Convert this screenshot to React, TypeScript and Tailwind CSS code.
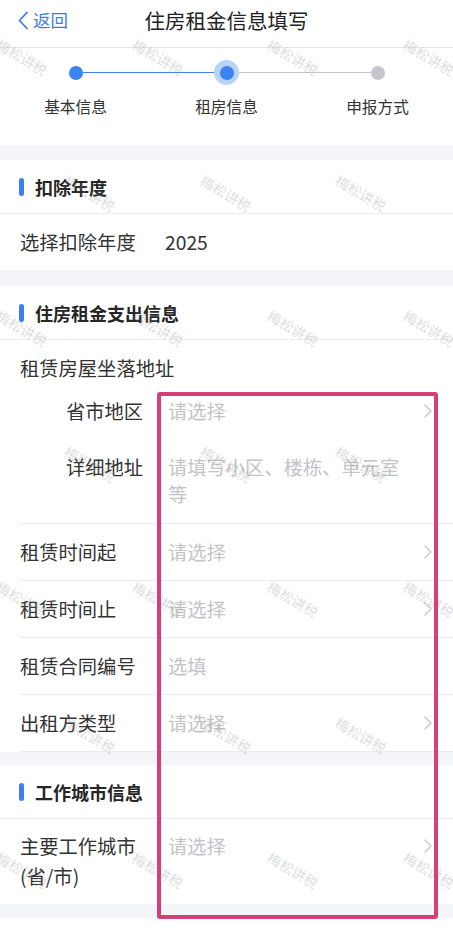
import React from "react";

const Chevron = () => (
  <svg width="8" height="14" viewBox="0 0 8 14" className="shrink-0">
    <polyline points="1,1 7,7 1,13" fill="none" stroke="#c8c8cc" strokeWidth="1.4" strokeLinecap="round" strokeLinejoin="round" />
  </svg>
);

const SectionHeader = ({ title }: { title: string }) => (
  <div className="h-[54px] flex items-center pl-[19px] border-b border-[#ececee] bg-white">
    <div className="w-[5px] h-[18px] rounded-full bg-[#3b7ff0]" />
    <div className="ml-[11px] text-[18px] font-bold text-[#262626] leading-none">{title}</div>
  </div>
);

const Row = ({ label, value, placeholder, chevron }: { label: string; value?: string; placeholder?: string; chevron?: boolean }) => (
  <div className="ml-[20px] h-[57px] flex items-center border-b border-[#ececee] pr-[21px]">
    <div className="w-[148px] shrink-0 text-[19.3px] text-[#333]">{label}</div>
    <div className="flex-1 text-[19.3px] text-[#c3c3c8]">{placeholder}</div>
    {value && <div className="flex-1 text-[19.3px] text-[#333]">{value}</div>}
    {chevron && <Chevron />}
  </div>
);

const Watermarks = () => {
  const rows = [57, 192.5, 328, 463.5, 599, 734.5, 870];
  const items: { x: number; y: number }[] = [];
  rows.forEach((y, i) => {
    const xs = i % 2 === 0 ? [22, 157.5, 293, 428.5] : [-45.5, 90, 225.5, 361, 496.5];
    xs.forEach((x) => items.push({ x, y }));
  });
  return (
    <div className="absolute inset-0 pointer-events-none overflow-hidden">
      {items.map((p, i) => (
        <div
          key={i}
          className="absolute text-[14px] leading-none whitespace-nowrap text-[rgba(140,140,140,0.3)] rotate-[30deg] w-[60px] h-[16px] flex items-center justify-center"
          style={{ left: p.x - 30, top: p.y - 8 }}
        >
          梅松讲税
        </div>
      ))}
    </div>
  );
};

export default function App() {
  return (
    <div className="relative w-[453px] h-[931px] overflow-hidden bg-white font-['Noto_Sans_CJK_SC','Noto_Sans',sans-serif]">
      {/* Header */}
      <div className="h-[48px] border-b border-[#e4e4e6] grid grid-cols-[1fr_auto_1fr] items-start">
        <div className="h-[40px] flex items-center pl-[17px] text-[#3e7fdd]">
          <svg width="12" height="19" viewBox="0 0 12 19">
            <polyline points="10,1.5 2.5,9.5 10,17.5" fill="none" stroke="#3e7fdd" strokeWidth="1.8" strokeLinecap="round" strokeLinejoin="round" />
          </svg>
          <span className="ml-[4px] text-[17.5px] leading-none">返回</span>
        </div>
        <div className="h-[40px] flex items-center text-[20.5px] text-[#222]">住房租金信息填写</div>
        <div />
      </div>

      {/* Stepper */}
      <div className="h-[97px] pt-[12px]">
        <div className="grid grid-cols-3">
          <div className="flex flex-col items-center">
            <div className="w-full h-[25px] flex items-center">
              <div className="flex-1 h-[1.5px] bg-transparent" />
              <div className="w-[14px] h-[14px] rounded-full bg-[#3d83f2]" />
              <div className="flex-1 h-[1.5px] bg-[#3d83f2]" />
            </div>
            <div className="mt-[11px] text-[15.7px] leading-[22px] text-[#333]">基本信息</div>
          </div>
          <div className="flex flex-col items-center">
            <div className="w-full h-[25px] flex items-center">
              <div className="flex-1 h-[1.5px] bg-[#3d83f2]" />
              <div className="w-[25px] h-[25px] rounded-full bg-[#b6d3fa] flex items-center justify-center">
                <div className="w-[14px] h-[14px] rounded-full bg-[#3d83f2]" />
              </div>
              <div className="flex-1 h-[1.5px] bg-[#c8c8ce]" />
            </div>
            <div className="mt-[11px] text-[15.7px] leading-[22px] text-[#333]">租房信息</div>
          </div>
          <div className="flex flex-col items-center">
            <div className="w-full h-[25px] flex items-center">
              <div className="flex-1 h-[1.5px] bg-[#c8c8ce]" />
              <div className="w-[14px] h-[14px] rounded-full bg-[#c6c6cd]" />
              <div className="flex-1 h-[1.5px] bg-transparent" />
            </div>
            <div className="mt-[11px] text-[15.7px] leading-[22px] text-[#333]">申报方式</div>
          </div>
        </div>
      </div>

      <div className="h-[15px] bg-[#f4f5f8]" />

      {/* 扣除年度 */}
      <SectionHeader title="扣除年度" />
      <div className="h-[56px] flex items-center pl-[20px]">
        <div className="w-[145px] shrink-0 text-[19.3px] text-[#333]">选择扣除年度</div>
        <div className="text-[19.3px] text-[#333]">2025</div>
      </div>

      <div className="h-[16px] bg-[#f4f5f8]" />

      {/* 住房租金支出信息 */}
      <SectionHeader title="住房租金支出信息" />
      <div className="ml-[20px] border-b border-[#ececee]">
        <div className="h-[56px] flex items-center text-[19.3px] text-[#333]">租赁房屋坐落地址</div>
        <div className="h-[30px] flex items-center pr-[21px]">
          <div className="w-[148px] shrink-0 pr-[25px] text-right text-[19.3px] text-[#333]">省市地区</div>
          <div className="flex-1 text-[19.3px] text-[#c3c3c8]">请选择</div>
          <Chevron />
        </div>
        <div className="pt-[28px] pb-[15px] flex items-start">
          <div className="w-[148px] shrink-0 pr-[25px] text-right text-[19.3px] leading-[27px] text-[#333]">详细地址</div>
          <div className="w-[240px] text-[19.3px] leading-[27px] text-[#c3c3c8]">请填写小区、楼栋、单元室等</div>
        </div>
      </div>
      <Row label="租赁时间起" placeholder="请选择" chevron />
      <Row label="租赁时间止" placeholder="请选择" chevron />
      <Row label="租赁合同编号" placeholder="选填" />
      <Row label="出租方类型" placeholder="请选择" chevron />

      <div className="h-[13px] bg-[#f4f5f8]" />

      {/* 工作城市信息 */}
      <SectionHeader title="工作城市信息" />
      <div className="ml-[20px] pt-[12px] pb-[13px] flex items-start pr-[21px]">
        <div className="w-[148px] shrink-0 text-[19.3px] leading-[30px] text-[#333]">
          <div>主要工作城市</div>
          <div>(省/市)</div>
        </div>
        <div className="flex-1 text-[19.3px] leading-[30px] text-[#c3c3c8]">请选择</div>
        <div className="h-[30px] flex items-center">
          <Chevron />
        </div>
      </div>
      <div className="h-[14px] bg-[#f4f5f8]" />
      <div className="h-[40px] bg-white" />

      <Watermarks />

      {/* Annotation box */}
      <div className="absolute left-[157px] top-[392px] w-[281px] h-[527px] border-[4px] border-[#d6407a] rounded-[3px] pointer-events-none" />
    </div>
  );
}
